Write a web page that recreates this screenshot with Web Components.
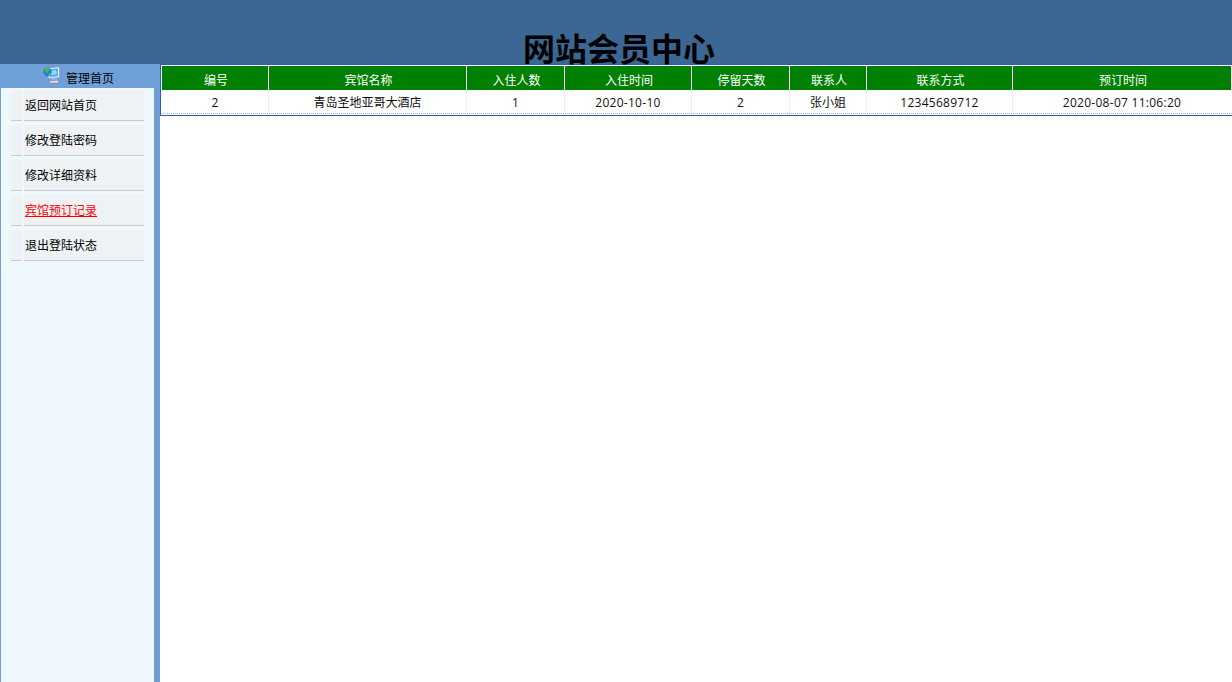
<!DOCTYPE html>
<html lang="zh-CN"><head><meta charset="utf-8"><title>网站会员中心</title>
<style>
html,body{margin:0;padding:0;height:100%;overflow:hidden;background:#fff}
body{font:12px "Open Sans","Noto Sans CJK SC",sans-serif;color:#000}
app-shell{height:682px}
</style></head><body>
<app-shell>
<site-header slot="top">网站会员中心</site-header>
<side-menu slot="side" heading="管理首页">
<menu-item>返回网站首页</menu-item>
<menu-item>修改登陆密码</menu-item>
<menu-item>修改详细资料</menu-item>
<menu-item active>宾馆预订记录</menu-item>
<menu-item>退出登陆状态</menu-item>
</side-menu>
<booking-table slot="main"></booking-table>
</app-shell>
<script>
function def(name,css,html){
  customElements.define(name,class extends HTMLElement{
    connectedCallback(){
      if(this.shadowRoot)return;
      const r=this.attachShadow({mode:'open'});
      r.innerHTML='<style>'+css+'</style>'+(typeof html==='function'?html(this):html);
    }
  });
}
def('app-shell',`:host{display:grid;grid-template-rows:64px 1fr;grid-template-columns:160px 1fr;width:1232px}
.t{grid-column:1/3;display:block}`,`<slot name="top" class="t"></slot><slot name="side"></slot><slot name="main"></slot>`);
def('site-header',`:host{display:block;height:64px;background:#3c6795;position:relative}
h1{margin:0;position:absolute;left:6px;right:0;top:29px;height:36px;overflow:hidden;text-align:center;font:bold 32px/42px "Noto Sans CJK SC",sans-serif;color:#000}
h1 span{display:block;margin-top:-3px}`,`<h1><span><slot></slot></span></h1>`);
def('side-menu',`:host{display:flex;flex-direction:column;height:618px;background:#f0f8ff;border-left:1px solid #6f9fd8;border-right:6px solid #6f9fd8;box-sizing:border-box;position:relative;z-index:1}
.h{height:24px;flex:none;margin-left:-1px;background:#6f9fd8;position:relative;font-size:12px;color:#000}
.h span{position:absolute;left:66px;top:5px;line-height:18px;font-family:"Noto Sans CJK SC",sans-serif;white-space:nowrap}
svg{position:absolute;left:43px;top:2px;width:17px;height:18px}
.l{display:flex;flex-direction:column;padding:2px 10px 0}`,
h=>`<div class="h"><svg viewBox="0 0 17 18"><path d="M5 2.500 15 .8 16.500 1.500V11.500L7 12.500 5 11.500z" fill="#eef3fb" stroke="#8d90bd" stroke-width=".7"/><path d="M6.500 3.500 15 2.300V10.300L6.500 11.200z" fill="#43b2f2"/><path d="M8 5 13 4 14 8 8 9z" fill="#8fdcff"/><path d="M9 12.500h5v2H9z" fill="#b7b6d6"/><path d="M6.500 14.500 15 14 16.500 17.300H6.500z" fill="#d9d8ec" stroke="#77759f" stroke-width=".7"/><circle cx="4.500" cy="6" r="4.200" fill="#1f82cf"/><path d="M1.500 3.500C2.500 1.700 5 1.300 6.800 2.500 6.500 4 5.500 4.500 5 6.500 3.800 7.300 2 6 1.500 3.500z" fill="#4db848"/><path d="M5.500 8 7.500 6.800 7 9 5.500 9.700z" fill="#66c05a"/></svg><span>${h.getAttribute('heading')}</span></div><div class="l"><slot></slot></div>`);
def('menu-item',`:host{display:grid;grid-template-columns:11px 1fr;column-gap:2px;height:31px;margin-bottom:4px;border-bottom:1px solid #c8cccc;box-sizing:border-box;background:linear-gradient(90deg,#eef2f4 11px,#f0f8ff 11px,#f0f8ff 13px,#eef2f4 13px);font:12px/30px "Noto Sans CJK SC",sans-serif;color:#000;position:relative}
:host([active]){color:#f00}
:host([active]) a{text-decoration:underline}
a{grid-column:2;padding-left:1px;color:inherit;text-decoration:none;cursor:pointer;white-space:nowrap;line-height:30px}
.cut{position:absolute;left:11px;width:2px;bottom:-1px;height:1px;background:#f0f8ff}`,`<i></i><a><slot></slot></a><span class="cut"></span>`);
const cols=[106,198,98,127,98,77,146,219];
const head=['编号','宾馆名称','入住人数','入住时间','停留天数','联系人','联系方式','预订时间'];
const row=['2','青岛圣地亚哥大酒店','1','2020-10-10','2','张小姐','12345689712','2020-08-07 11:06:20'];
def('booking-table',`:host{display:block;height:52px;box-sizing:border-box;border:1px solid #2a62ad;border-right:0;background:#fff;padding:1px 0 0 1px;font-size:12px}
.g{display:grid;grid-template-columns:${cols.map(c=>c+'px').join(' ')};grid-template-rows:24px 23px;border-bottom:1px dotted #bbb;box-sizing:content-box}
.c{text-align:center;font-family:"Noto Sans CJK SC",sans-serif;box-sizing:border-box}
.th{background:#008000;color:#fff;line-height:27px;border-left:1px solid #fff;padding-left:2px;font-weight:400}
.td{background:#fff;color:#111;line-height:25px;border-left:1px solid #eee;font-family:"Open Sans","Noto Sans CJK SC",sans-serif}
.num{letter-spacing:.27px}
.first{border-left:0}`,
()=>`<div class="g">${head.map((t,i)=>`<div class="c th${i?'':' first'}">${t}</div>`).join('')}${row.map((t,i)=>`<div class="c td${i?'':' first'}${/^[\d :-]+$/.test(t)?' num':''}">${t}</div>`).join('')}</div>`);
</script>
</body></html>
